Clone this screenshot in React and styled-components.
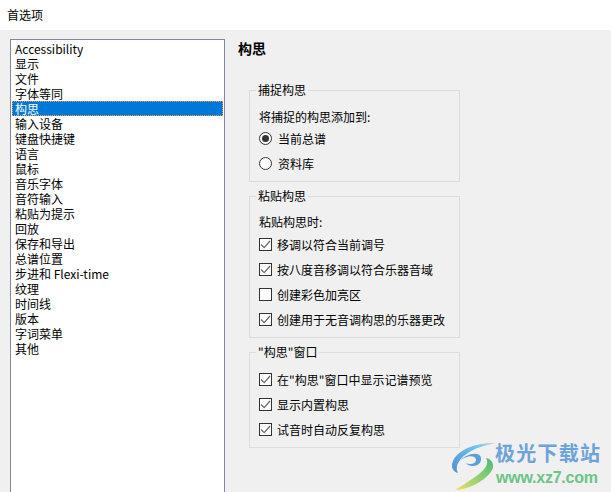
import React from "react";
import styled, { createGlobalStyle } from "styled-components";

const FONT = `"Noto Sans CJK SC", "Liberation Sans", sans-serif`;

const GlobalStyle = createGlobalStyle`
  html, body {
    margin: 0;
    padding: 0;
    height: 100%;
    overflow: hidden;
    background: #f0f0f0;
  }
  #root {
    height: 100%;
  }
`;

const Page = styled.div`
  position: relative;
  width: 611px;
  height: 492px;
  overflow: hidden;
  display: flex;
  flex-direction: column;
  font-family: ${FONT};
  font-size: 12px;
  color: #000;
  background: #f0f0f0;
`;

const TitleBar = styled.div`
  height: 30px;
  flex: none;
  box-sizing: border-box;
  display: flex;
  align-items: center;
  padding: 0 0 2px 7px;
  background: #fff;
`;

const Body = styled.div`
  flex: 1;
  min-height: 0;
  display: flex;
  padding: 9px 0 0 10px;
`;

const List = styled.ul`
  list-style: none;
  margin: 0 13px -20px 0;
  padding: 1px;
  width: 215px;
  box-sizing: border-box;
  flex: none;
  background: #fff;
  border: 1px solid #82879b;
`;

const Item = styled.li`
  height: 15px;
  line-height: 15px;
  padding-left: 3px;
  box-sizing: border-box;
  white-space: nowrap;
  background: ${p => (p.$active ? "#0078d7" : "transparent")};
  color: ${p => (p.$active ? "#fff" : "#000")};
  outline: ${p => (p.$active ? "1px dotted #f0a040" : "none")};
  outline-offset: -1px;
`;

const Content = styled.div`
  flex: 1;
`;

const Heading = styled.h1`
  margin: 0;
  height: 21px;
  line-height: 19px;
  font-size: 14px;
  font-weight: 700;
`;

const Groups = styled.div`
  display: flex;
  flex-direction: column;
  gap: 14px;
  margin: 30px 0 0 11px;
  width: 211px;
`;

const Group = styled.fieldset`
  margin: 0;
  padding: 0 0 0 9px;
  box-sizing: border-box;
  height: ${p => p.$height}px;
  border: 1px solid #dcdcdc;
  border-radius: 0;
  min-width: 0;
  position: relative;
`;

const Legend = styled.legend`
  position: absolute;
  top: -9px;
  left: 6px;
  padding: 0 2px;
  height: 16px;
  line-height: 16px;
  background: #f0f0f0;
`;

const Note = styled.div`
  height: 16px;
  line-height: 16px;
  margin-top: ${p => p.$top}px;
  margin-bottom: ${p => 19 - p.$top}px;
`;

const Row = styled.label`
  display: flex;
  align-items: center;
  gap: 5px;
  height: 25px;
  white-space: nowrap;
`;

const Rows = styled.div`
  margin-top: ${p => p.$top || 0}px;
`;

const CheckBox = styled.span`
  width: 13px;
  height: 13px;
  box-sizing: border-box;
  flex: none;
  border: 1px solid #333;
  background: #fff;
  display: flex;
  align-items: center;
  justify-content: center;
`;

const Radio = styled.span`
  width: 13px;
  height: 13px;
  margin-right: 1px;
  box-sizing: border-box;
  flex: none;
  border-radius: 50%;
  border: 1px solid #333;
  background: #fff;
  display: flex;
  align-items: center;
  justify-content: center;

  &::after {
    content: "";
    display: ${p => (p.$on ? "block" : "none")};
    width: 7px;
    height: 7px;
    border-radius: 50%;
    background: #333;
  }
`;

const Watermark = styled.div`
  position: absolute;
  right: 0;
  bottom: 0;
  width: 171px;
  height: 62px;
`;

const Tick = () => (
  <svg width="11" height="11" viewBox="0 0 11 11">
    <path d="M1 5.5 L4.2 8.7 L10 2" fill="none" stroke="#666" strokeWidth="1.2" />
  </svg>
);

const Check = ({ on, children }) => (
  <Row>
    <CheckBox>{on && <Tick />}</CheckBox>
    {children}
  </Row>
);

const Option = ({ on, children }) => (
  <Row>
    <Radio $on={on} />
    {children}
  </Row>
);

const pages = [
  "Accessibility", "显示", "文件", "字体等同", "构思", "输入设备", "键盘快捷键", "语言",
  "鼠标", "音乐字体", "音符输入", "粘贴为提示", "回放", "保存和导出", "总谱位置",
  "步进和 Flexi-time", "纹理", "时间线", "版本", "字词菜单", "其他",
];

const Logo = () => (
  <Watermark>
    <svg width="171" height="62" viewBox="0 0 171 62">
      <defs>
        <linearGradient id="swirlTop" x1="0" y1="1" x2="1" y2="0">
          <stop offset="0" stopColor="#4f8fd0" />
          <stop offset="0.7" stopColor="#6fc0ee" />
          <stop offset="1" stopColor="#d8d8c8" />
        </linearGradient>
        <linearGradient id="swirlLow" x1="0" y1="1" x2="1" y2="0">
          <stop offset="0" stopColor="#f0e060" />
          <stop offset="0.5" stopColor="#90d070" />
          <stop offset="1" stopColor="#50b878" />
        </linearGradient>
      </defs>
      <path d="M56 13 C38 12 18 19 13 31 C10 38 14 42 18 43 C14 36 20 27 31 21 C38 17 47 15 56 13 Z" fill="url(#swirlTop)" />
      <path d="M18 33 C24 25 36 24 36 30 C36 34 29 35 26 33 C29 38 42 37 41 28 C40 21 26 23 18 33 Z" fill="#5a9fd8" />
      <path d="M15 60 C28 60 48 50 53 38 C54 33 51 29 46 28 C50 34 44 41 35 47 C28 52 21 56 15 60 Z" fill="url(#swirlLow)" />
      <text x="55" y="31" fontFamily={FONT} fontSize="20" fontWeight="700" fill="#6ba3da" textLength="105">极光下载站</text>
      <text x="56" y="53" fontFamily={`"Liberation Sans", sans-serif`} fontSize="16" fontWeight="700" fill="#6cc486" textLength="102">www.xz7.com</text>
    </svg>
  </Watermark>
);

export default function App() {
  return (
    <Page>
      <GlobalStyle />
      <TitleBar>首选项</TitleBar>
      <Body>
        <List>
          {pages.map(name => (
            <Item key={name} $active={name === "构思"}>{name}</Item>
          ))}
        </List>
        <Content>
          <Heading>构思</Heading>
          <Groups>
            <Group $height={92}>
              <Legend>捕捉构思</Legend>
              <Note $top={18}>将捕捉的构思添加到:</Note>
              <Option on>当前总谱</Option>
              <Option>资料库</Option>
            </Group>
            <Group $height={142}>
              <Legend>粘贴构思</Legend>
              <Note $top={17}>粘贴构思时:</Note>
              <Check on>移调以符合当前调号</Check>
              <Check on>按八度音移调以符合乐器音域</Check>
              <Check>创建彩色加亮区</Check>
              <Check on>创建用于无音调构思的乐器更改</Check>
            </Group>
            <Group $height={96}>
              <Legend>"构思"窗口</Legend>
              <Rows $top={14}>
                <Check on>在"构思"窗口中显示记谱预览</Check>
                <Check on>显示内置构思</Check>
                <Check on>试音时自动反复构思</Check>
              </Rows>
            </Group>
          </Groups>
        </Content>
      </Body>
      <Logo />
    </Page>
  );
}
